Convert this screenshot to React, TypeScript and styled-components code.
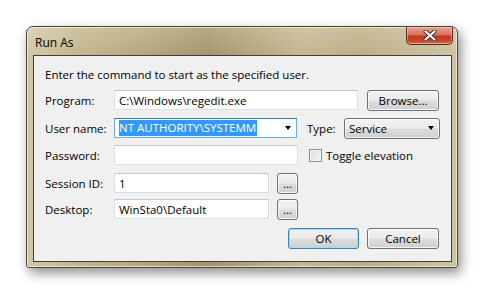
import React from "react";
import styled, { createGlobalStyle } from "styled-components";

const GlobalStyle = createGlobalStyle`
  html, body {
    margin: 0;
    padding: 0;
    background: #ffffff;
  }
  body {
    font-family: "Open Sans", "Noto Sans", "DejaVu Sans", sans-serif;
    font-size: 11.5px;
    color: #000;
  }
`;

const Page = styled.div`
  width: 485px;
  height: 296px;
  padding: 26px 0 0 26px;
  box-sizing: border-box;
`;

const Window = styled.div`
  width: 432px;
  height: 242px;
  box-sizing: border-box;
  border: 1px solid #4a4636;
  border-radius: 7px 7px 3px 3px;
  display: flex;
  flex-direction: column;
  background:
    linear-gradient(180deg, rgba(255,255,255,0.2) 0%, rgba(255,255,255,0) 30px),
    linear-gradient(90deg, #d2c8a6 0%, #c2b58b 12%, #b5a679 28%, #a3946a 42%, #b2a47a 52%, #c3b78f 64%, #bbae84 78%, #cdc3a1 100%);
  box-shadow: 3px 5px 12px rgba(0, 0, 0, 0.45), inset 0 0 0 1px rgba(255,255,240,0.6);
`;

const TitleBar = styled.div`
  height: 28px;
  display: flex;
  justify-content: space-between;
  align-items: flex-start;
  padding: 0 4px 0 8px;
`;

const Title = styled.div`
  margin-top: 8px;
  font-size: 12px;
  line-height: 15px;
  color: #000;
`;

const CloseButton = styled.div`
  width: 47px;
  height: 18px;
  box-sizing: border-box;
  border: 1px solid #5c2a1e;
  border-top: none;
  border-radius: 0 0 5px 5px;
  background: linear-gradient(180deg, #e8a595 0%, #d7735d 45%, #c0391f 55%, #c94a2c 85%, #dc7b5a 100%);
  box-shadow: inset 0 0 0 1px rgba(255,255,255,0.35);
  display: flex;
  align-items: center;
  justify-content: center;
`;

const Client = styled.div`
  flex: 1;
  margin: 0 5px 5px 6px;
  border: 1px solid #3f3f3f;
  background: #f0f0f0;
  padding: 11px 11px 0 11px;
  display: flex;
  flex-direction: column;
`;

const Intro = styled.div`
  line-height: 15px;
  margin-bottom: 8px;
`;

const Row = styled.div<{ $mb?: number }>`
  display: flex;
  align-items: center;
  height: 20px;
  margin-bottom: ${(p) => (p.$mb ?? 7)}px;
`;

const Label = styled.div<{ $w?: number }>`
  width: ${(p) => p.$w ?? 69}px;
  flex-shrink: 0;
  line-height: 15px;
`;

const TextBox = styled.div<{ $w: number }>`
  width: ${(p) => p.$w}px;
  height: 20px;
  box-sizing: border-box;
  background: #fff;
  border: 1px solid #dbdfe6;
  border-top-color: #c4c8ce;
  padding: 0 0 0 4px;
  display: flex;
  align-items: center;
  line-height: 15px;
  white-space: nowrap;
  overflow: hidden;
`;

const Combo = styled(TextBox)`
  justify-content: space-between;
  padding-right: 5px;
  border-color: #6aaddf;
  border-top-color: #3d7bad;
`;

const Selected = styled.span`
  background: #3399ff;
  color: #fff;
  line-height: 16px;
  padding-right: 1px;
`;

const Arrow = styled.span`
  width: 0;
  height: 0;
  border-left: 3.5px solid transparent;
  border-right: 3.5px solid transparent;
  border-top: 4px solid #000;
`;

const Button = styled.div<{ $w: number; $default?: boolean }>`
  width: ${(p) => p.$w}px;
  height: 21px;
  box-sizing: border-box;
  border: 1px solid ${(p) => (p.$default ? "#3c7fb1" : "#707070")};
  border-radius: 3px;
  background: linear-gradient(180deg, #f2f2f2 0%, #ebebeb 48%, #dddddd 52%, #cfcfcf 100%);
  box-shadow: inset 0 0 0 1px ${(p) => (p.$default ? "#9fdcf6" : "rgba(255,255,255,0.8)")};
  display: flex;
  align-items: center;
  justify-content: center;
  line-height: 15px;
  flex-shrink: 0;
`;

const TypeSelect = styled(Button)`
  justify-content: space-between;
  padding: 0 5px 0 4px;
`;

const Gap = styled.div<{ $w: number }>`
  width: ${(p) => p.$w}px;
  flex-shrink: 0;
`;

const CheckBox = styled.div`
  width: 13px;
  height: 13px;
  box-sizing: border-box;
  border: 1px solid #8e8f8f;
  background: linear-gradient(135deg, #dcdcdc 0%, #f6f6f6 100%);
  box-shadow: inset 0 0 0 1px #f4f4f4;
  margin-right: 4px;
`;

const ButtonRow = styled.div`
  display: flex;
  justify-content: flex-end;
  gap: 8px;
  margin-top: 3px;
  padding-right: 1px;
`;

export default function App() {
  return (
    <>
      <GlobalStyle />
      <Page>
        <Window>
          <TitleBar>
            <Title>Run As</Title>
            <CloseButton>
              <svg width="14" height="11" viewBox="0 0 14 11">
                <path d="M2.5 1.5 L11.5 9.5 M11.5 1.5 L2.5 9.5" stroke="#3a2a28" strokeWidth="4" strokeLinecap="round" />
                <path d="M2.5 1.5 L11.5 9.5 M11.5 1.5 L2.5 9.5" stroke="#ffffff" strokeWidth="2.2" strokeLinecap="round" />
              </svg>
            </CloseButton>
          </TitleBar>
          <Client>
            <Intro>Enter the command to start as the specified user.</Intro>
            <Row $mb={8}>
              <Label>Program:</Label>
              <TextBox $w={244}>C:\Windows\regedit.exe</TextBox>
              <Gap $w={9} />
              <Button $w={72}>Browse...</Button>
            </Row>
            <Row>
              <Label>User name:</Label>
              <Combo $w={184}>
                <Selected>NT AUTHORITY\SYSTEMM</Selected>
                <Arrow />
              </Combo>
              <Gap $w={10} />
              <Label $w={37}>Type:</Label>
              <TypeSelect $w={96}>
                <span>Service</span>
                <Arrow />
              </TypeSelect>
            </Row>
            <Row $mb={8}>
              <Label>Password:</Label>
              <TextBox $w={184} />
              <Gap $w={11} />
              <CheckBox />
              <span>Toggle elevation</span>
            </Row>
            <Row $mb={6}>
              <Label>Session ID:</Label>
              <TextBox $w={155}>1</TextBox>
              <Gap $w={8} />
              <Button $w={21}>...</Button>
            </Row>
            <Row $mb={6}>
              <Label>Desktop:</Label>
              <TextBox $w={155}>WinSta0\Default</TextBox>
              <Gap $w={8} />
              <Button $w={21}>...</Button>
            </Row>
            <ButtonRow>
              <Button $w={71} $default>OK</Button>
              <Button $w={72}>Cancel</Button>
            </ButtonRow>
          </Client>
        </Window>
      </Page>
    </>
  );
}
